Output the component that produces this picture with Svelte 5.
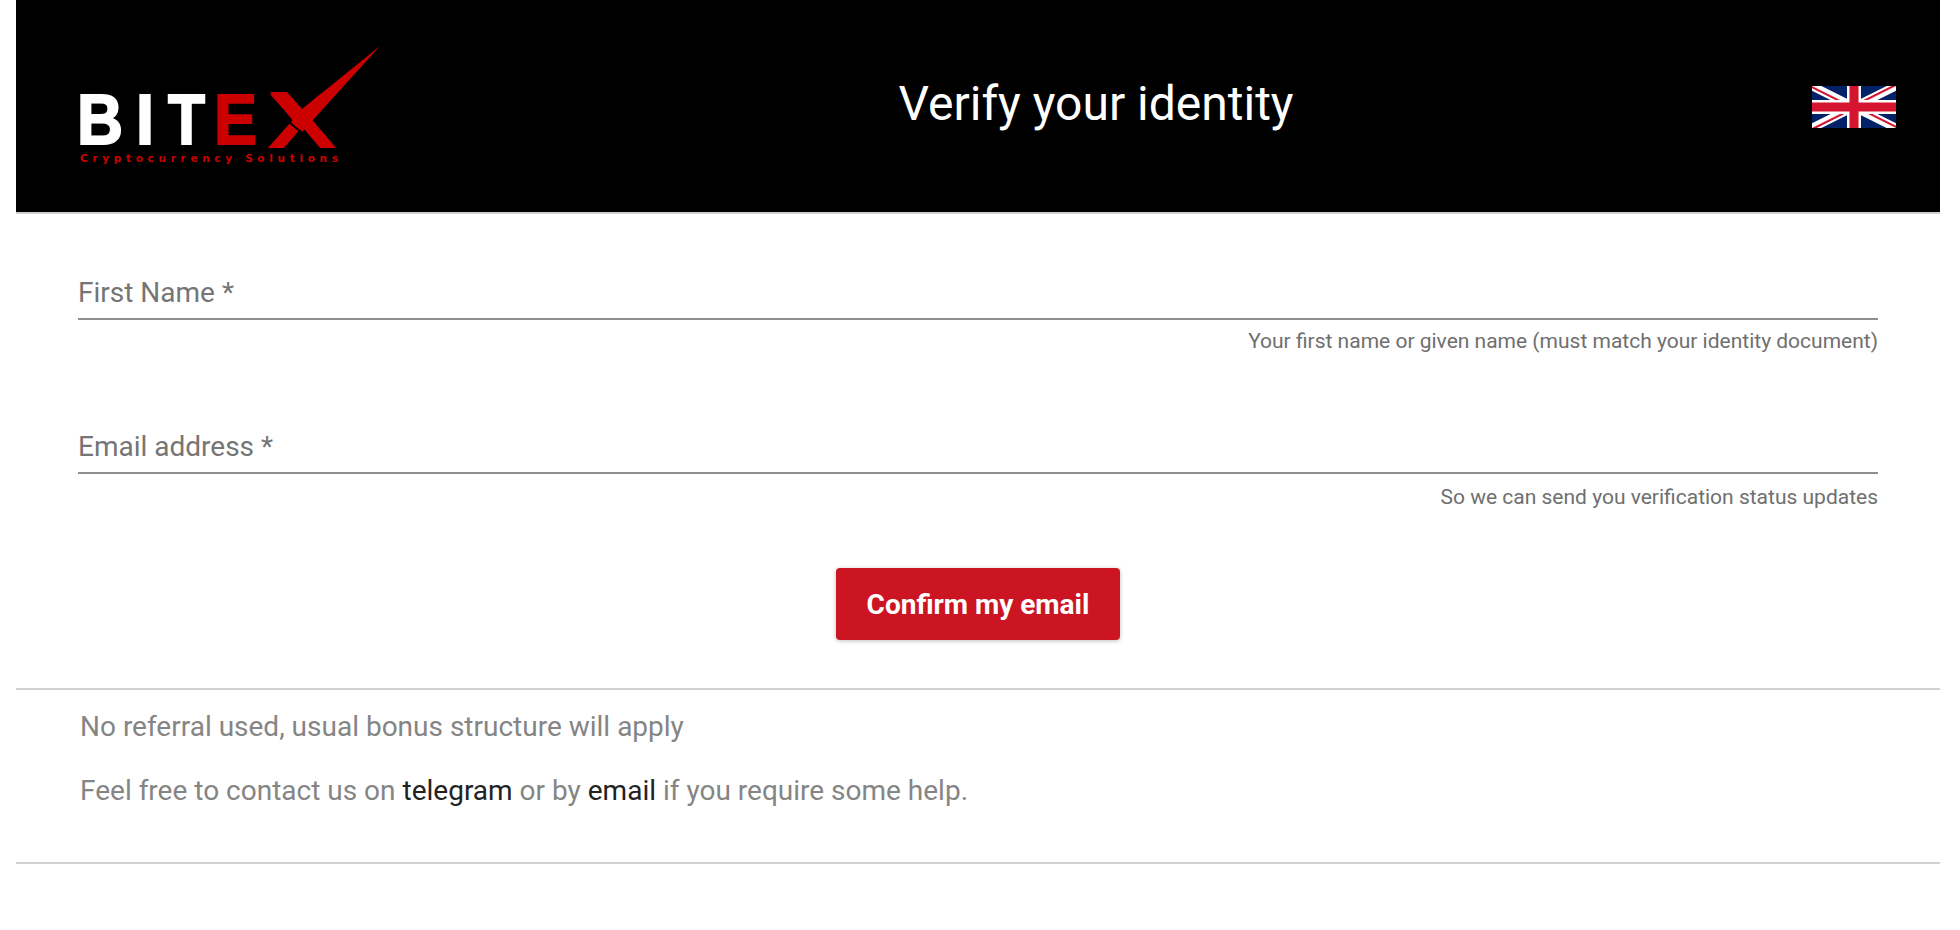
<script>
  const fields = [
    { label: 'First Name *', help: 'Your first name or given name (must match your identity document)' },
    { label: 'Email address *', help: 'So we can send you verification status updates' }
  ];
</script>

<div class="page">
  <header class="top">
    <svg class="logo" viewBox="0 0 300 130" width="300" height="130" aria-label="Bitex logo">
      <text class="w" x="-3" y="98" textLength="46" lengthAdjust="spacingAndGlyphs">B</text>
      <text class="w" x="56" y="98" textLength="18" lengthAdjust="spacingAndGlyphs">I</text>
      <text class="w" x="88" y="98" textLength="37" lengthAdjust="spacingAndGlyphs">T</text>
      <text class="r" x="134" y="98" textLength="43" lengthAdjust="spacingAndGlyphs">E</text>
      <text class="x" x="187" y="102" textLength="70" lengthAdjust="spacingAndGlyphs">X</text>
      <polygon points="208,40 222,63 264,29 264,40" fill="#000" />
      <polygon points="207,46 222,63 300,0 222,86 190,46" fill="#cc0000" />
      <line x1="209" y1="76" x2="223" y2="88" stroke="#000" stroke-width="2" />
      <text class="sub" x="0" y="116" textLength="258" lengthAdjust="spacing">Cryptocurrency Solutions</text>
    </svg>
    <h1>Verify your identity</h1>
    <svg class="flag" viewBox="0 0 60 30" width="84" height="42" preserveAspectRatio="none" aria-label="English">
      <clipPath id="cc"><path d="M30,15h30v15zv15h-30zh-30v-15zv-15h30z" /></clipPath>
      <rect width="60" height="30" fill="#012169" />
      <path d="M0 0L60 30M60 0L0 30" stroke="#fff" stroke-width="6" />
      <path d="M0 0L60 30M60 0L0 30" stroke="#d5152f" stroke-width="3" clip-path="url(#cc)" />
      <path d="M30 0V30M0 15H60" stroke="#fff" stroke-width="10" />
      <path d="M30 0V30M0 15H60" stroke="#d5152f" stroke-width="6.5" />
    </svg>
  </header>

  <form class="form" onsubmit={(e) => e.preventDefault()}>
    {#each fields as f}
      <div class="field">
        <div class="label">{f.label}</div>
        <div class="help">{f.help}</div>
      </div>
    {/each}
    <div class="actions"><button type="submit">Confirm my email</button></div>
  </form>

  <section class="info">
    <p>No referral used, usual bonus structure will apply</p>
    <p>Feel free to contact us on <a href="#t">telegram</a> or by <a href="#e">email</a> if you require some help.</p>
  </section>
</div>

<style>
  :global(body) { margin: 0; background: #fff; }
  .page { margin: 0 20px 0 16px; font-family: Roboto, sans-serif; height: 930px; overflow: hidden; }
  .top {
    height: 212px; background: #000; border-bottom: 2px solid #d0d0d0;
    display: flex; justify-content: space-between; align-items: center;
    padding: 0 44px 0 64px;
  }
  .logo { overflow: visible; align-self: flex-start; margin-top: 46px; }
  .logo text { font-family: "Liberation Sans", sans-serif; font-weight: 700; }
  .w { fill: #fff; stroke: #fff; stroke-width: 2px; font-size: 70px; }
  .r { fill: #cc0000; stroke: #cc0000; stroke-width: 2px; font-size: 70px; }
  .x { fill: #cc0000; font-size: 78px; }
  .logo .sub { fill: #cc0000; font-size: 10.5px; font-family: "DejaVu Sans", sans-serif; }
  h1 { margin: 0; color: #fff; font-size: 48px; font-weight: 400; line-height: 1; position: relative; top: -2px; }
  .flag { position: relative; top: 1px; }
  .form { padding: 52px 62px 0 62px; }
  .field { margin-bottom: 67px; }
  .field:nth-child(2) { margin-bottom: 59px; }
  .field:nth-child(2) .help { margin-top: 11px; }
  .label {
    color: #757575; font-size: 28px; line-height: 40px; height: 54px; box-sizing: border-box;
    border-bottom: 2px solid #8f8f8f; padding-top: 7px;
  }
  .help { color: #6f6f6f; font-size: 21px; line-height: 24px; text-align: right; margin-top: 9px; }
  .actions { display: flex; justify-content: center; margin-top: 2px; }
  button {
    width: 284px; height: 72px; padding: 1px 0 0; background: #cc1522; color: #fff; border: 0; border-radius: 4px;
    font: 700 28px Roboto, sans-serif; box-shadow: 0 1px 4px rgba(0,0,0,.25);
  }
  .info { margin-top: 48px; height: 176px; box-sizing: border-box; border-top: 2px solid #d0d0d0; border-bottom: 2px solid #d0d0d0; padding: 20px 64px 0; }
  .info p { margin: 0 0 30px; color: #858585; font-size: 28px; line-height: 34px; }
  .info a { color: #222; text-decoration: none; }
</style>
